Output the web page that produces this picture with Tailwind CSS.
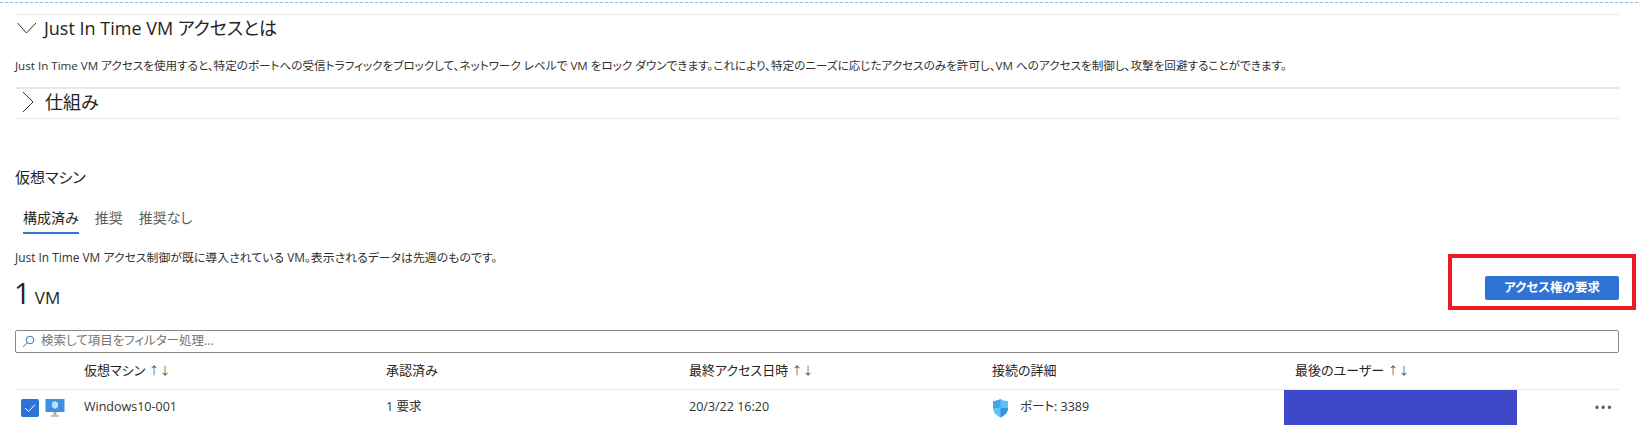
<!DOCTYPE html>
<html lang="ja">
<head>
  <meta charset="UTF-8" />
  <title>Just In Time VM アクセス</title>
  <script src="https://cdn.jsdelivr.net/npm/@tailwindcss/browser@4"></script>
</head>
<body class="bg-white text-[#323130] font-['Open_Sans','Noto_Sans_CJK_JP',sans-serif] [font-feature-settings:'palt'] overflow-hidden">

<div class="relative w-[1638px] h-[430px] overflow-hidden">
  <div class="h-[3px] border-b border-dashed border-[#8fbcd8]"></div>

  <div class="pl-[15px] pr-[19px] pt-[11px]">
    <!-- accordion -->
    <div class="h-[28px] pb-[1px] border-t border-[#e8e8e8] flex items-center text-[#252423]">
      <svg class="w-[24px] h-[14px] ml-[1px]" viewBox="0 0 24 14" fill="none" stroke="#333" stroke-width="1"><path d="M1.5 2 L10.5 12 L20 2"/></svg>
      <span class="ml-[4px] text-[18px] leading-[26px]">Just In Time VM アクセスとは</span>
    </div>
    <p class="mt-[14px] h-[33px] text-[11.6px] leading-[20px] whitespace-nowrap border-b-2 border-[#e8e8e8]">Just In Time VM アクセスを使用すると、特定のポートへの受信トラフィックをブロックして、ネットワーク レベルで VM をロック ダウンできます。これにより、特定のニーズに応じたアクセスのみを許可し、VM へのアクセスを制御し、攻撃を回避することができます。</p>
    <div class="h-[30px] pb-[3px] border-b border-[#e8e8e8] flex items-center text-[#252423]">
      <svg class="w-[14px] h-[24px] ml-[6px]" viewBox="0 0 14 24" fill="none" stroke="#333" stroke-width="1"><path d="M2 2 L12 12 L2 22"/></svg>
      <span class="ml-[10px] text-[18px] leading-[26px]">仕組み</span>
    </div>

    <h2 class="mt-[47px] text-[15px] leading-[22px] text-[#252423]">仮想マシン</h2>

    <!-- tabs -->
    <div class="mt-[19px] flex text-[14px] leading-[20px] pl-[8px] gap-[16px]">
      <div class="h-[27px] pt-[1px] border-b-2 border-[#2f74d0] text-[#252423]">構成済み</div>
      <div class="pt-[1px] text-[#605e5c]">推奨</div>
      <div class="pt-[1px] text-[#605e5c]">推奨なし</div>
    </div>

    <p class="mt-[14px] text-[11.9px] leading-[18px] whitespace-nowrap">Just In Time VM アクセス制御が既に導入されている VM。表示されるデータは先週のものです。</p>

    <!-- count + action -->
    <div class="mt-[11px] flex justify-between items-start h-[44px]">
      <div class="text-[#252423] leading-[36px] -ml-[1px] -mt-[2px]"><span class="text-[29px]">1</span> <span class="text-[17px]">VM</span></div>
      <button class="-mt-[1px] w-[134px] h-[24px] bg-[#2f74d4] rounded-[2px] text-white text-[12.5px] font-semibold">アクセス権の要求</button>
    </div>

    <!-- filter -->
    <div class="mt-[9px] h-[23px] border border-[#8a8886] rounded-[2px] flex items-center pl-[6px] text-[12.5px] text-[#757575]">
      <svg class="w-[13px] h-[13px]" viewBox="0 0 13 13" fill="none" stroke="#2f74d0" stroke-width="1"><circle cx="8" cy="5" r="3.8"/><path d="M5.2 7.8 L1 12"/></svg>
      <span class="ml-[6px]">検索して項目をフィルター処理...</span>
    </div>

    <!-- table -->
    <div class="grid grid-cols-[69px_302px_303px_303px_303px_1fr] h-[37px] items-center text-[13px] border-b border-[#e8e8e8] text-[#252423]">
      <div></div>
      <div>仮想マシン <span class="text-[#555] text-[11px]">↑↓</span></div>
      <div>承認済み</div>
      <div>最終アクセス日時 <span class="text-[#555] text-[11px]">↑↓</span></div>
      <div>接続の詳細</div>
      <div>最後のユーザー <span class="text-[#555] text-[11px]">↑↓</span></div>
    </div>
    <div class="grid grid-cols-[69px_302px_303px_303px_292px_233px_1fr] h-[35px] items-center text-[12.5px] text-[#323130]">
      <div class="flex items-center pl-[6px] gap-[6px]">
        <span class="w-[18px] h-[18px] rounded-[2px] bg-[#2f74d4] flex items-center justify-center">
          <svg class="w-[12px] h-[10px]" viewBox="0 0 12 10" fill="none" stroke="#fff" stroke-width="1"><path d="M1 5 L4.5 8.5 L11 1.5"/></svg>
        </span>
        <svg class="w-[20px] h-[20px]" viewBox="0 0 20 20">
          <rect x="0.5" y="1" width="19" height="13" rx="0.5" fill="#3f8fe8"/>
          <path d="M10 3 L13 4.8 V9 L10 11 L7 9 V4.8 Z" fill="#b5e6f7"/>
          <rect x="8.5" y="14" width="3" height="3" fill="#a8a8a8"/>
          <rect x="6" y="17" width="8" height="2" fill="#c4c4c4"/>
        </svg>
      </div>
      <div>Windows10-001</div>
      <div>1 要求</div>
      <div>20/3/22 16:20</div>
      <div class="flex items-center">
        <svg class="w-[17px] h-[20px]" viewBox="0 0 17 20">
          <path d="M8.5 1 C11 2.5 13.5 3 16 3 V10 C16 14.5 12.5 17.5 8.5 19.5 C4.5 17.5 1 14.5 1 10 V3 C3.5 3 6 2.5 8.5 1 Z" fill="#5ec5f2"/>
          <path d="M8.5 1 C6 2.5 3.5 3 1 3 V10 H8.5 Z" fill="#3fa7e6"/>
          <path d="M8.5 10 H16 C16 14.5 12.5 17.5 8.5 19.5 Z" fill="#3f8fe0"/>
        </svg>
        <span class="ml-[11px]">ポート: 3389</span>
      </div>
      <div class="h-[35px] bg-[#3f48c8]"></div>
      <div class="flex justify-end pr-[6px] text-[#555] tracking-[1px] text-[14px]">•••</div>
    </div>
  </div>

  <!-- annotation over the button -->
  <div class="absolute left-[1448px] top-[254px] w-[188px] h-[56px] border-4 border-[#ed1c24]"></div>
</div>

</body>
</html>
